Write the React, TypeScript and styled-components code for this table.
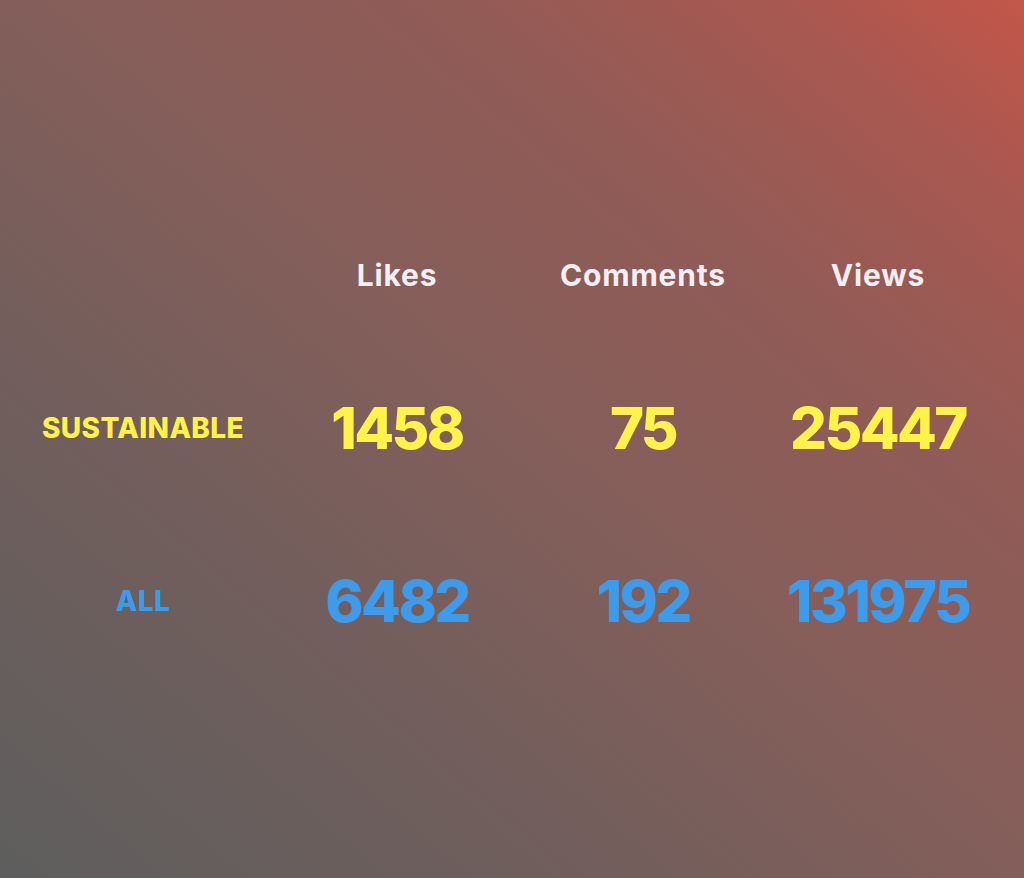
import styled, { createGlobalStyle } from "styled-components";

const GlobalStyle = createGlobalStyle`
  html, body {
    margin: 0;
    padding: 0;
  }
  body {
    font-family: "Inter", "Liberation Sans", sans-serif;
  }
`;

const Page = styled.div`
  min-height: 100vh;
  box-sizing: border-box;
  padding-top: 255px;
  background: linear-gradient(to top right, #5e5e5e 0%, #725e5c 30%, #855e5a 52%, #925b56 72%, #a85850 88%, #c4564a 100%);
`;

const Table = styled.div`
  display: grid;
  grid-template-columns: 286px 222px 270px 200px;
  grid-template-rows: 40px 80px 80px;
  row-gap: 93px;
  align-items: center;
  justify-items: center;
`;

const Header = styled.div`
  color: #f1eff4;
  font-size: 30px;
  font-weight: 700;
  letter-spacing: 0.8px;
`;

const Label = styled.div<{ $color: string }>`
  color: ${(p) => p.$color};
  font-size: 28px;
  font-weight: 800;
  letter-spacing: 0.4px;
`;

const Value = styled.div<{ $color: string }>`
  color: ${(p) => p.$color};
  font-size: 58px;
  font-weight: 800;
  letter-spacing: -2.6px;
`;

const YELLOW = "#fff34a";
const BLUE = "#3d9bec";

const rows = [
  { label: "SUSTAINABLE", color: YELLOW, values: ["1458", "75", "25447"] },
  { label: "ALL", color: BLUE, values: ["6482", "192", "131975"] },
];

export default function App() {
  return (
    <>
      <GlobalStyle />
      <Page>
        <Table>
          <div />
          <Header>Likes</Header>
          <Header>Comments</Header>
          <Header>Views</Header>
          {rows.map((r) => [
            <Label key={r.label} $color={r.color}>{r.label}</Label>,
            ...r.values.map((v, i) => (
              <Value key={r.label + i} $color={r.color}>{v}</Value>
            )),
          ])}
        </Table>
      </Page>
    </>
  );
}
